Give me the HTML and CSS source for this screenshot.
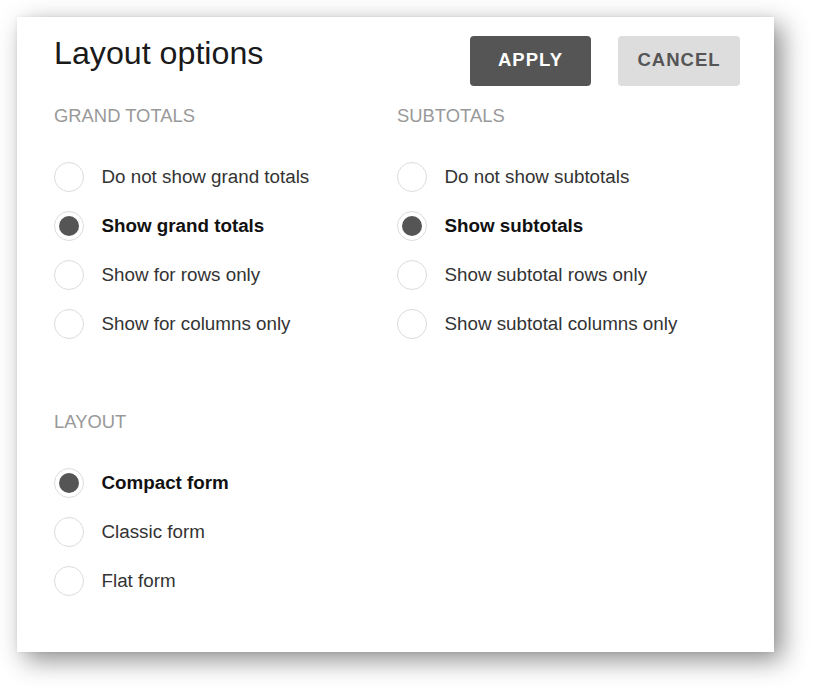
FILE: index.html
```html
<!DOCTYPE html>
<html lang="en">
<head>
<meta charset="utf-8">
<title>Layout options</title>
<link rel="stylesheet" href="styles.css">
</head>
<body>
<div class="panel">
  <div class="header">
    <h1 class="title">Layout options</h1>
    <div class="buttons">
      <button class="btn btn-apply">APPLY</button>
      <button class="btn btn-cancel">CANCEL</button>
    </div>
  </div>

  <div class="columns">
    <div class="section">
      <div class="section-title">GRAND TOTALS</div>
      <ul class="options">
        <li class="option"><span class="radio"></span><span class="label">Do not show grand totals</span></li>
        <li class="option selected"><span class="radio"></span><span class="label">Show grand totals</span></li>
        <li class="option"><span class="radio"></span><span class="label">Show for rows only</span></li>
        <li class="option"><span class="radio"></span><span class="label">Show for columns only</span></li>
      </ul>
    </div>
    <div class="section">
      <div class="section-title">SUBTOTALS</div>
      <ul class="options">
        <li class="option"><span class="radio"></span><span class="label">Do not show subtotals</span></li>
        <li class="option selected"><span class="radio"></span><span class="label">Show subtotals</span></li>
        <li class="option"><span class="radio"></span><span class="label">Show subtotal rows only</span></li>
        <li class="option"><span class="radio"></span><span class="label">Show subtotal columns only</span></li>
      </ul>
    </div>
  </div>

  <div class="section layout-section">
    <div class="section-title">LAYOUT</div>
    <ul class="options">
      <li class="option selected"><span class="radio"></span><span class="label">Compact form</span></li>
      <li class="option"><span class="radio"></span><span class="label">Classic form</span></li>
      <li class="option"><span class="radio"></span><span class="label">Flat form</span></li>
    </ul>
  </div>
</div>
</body>
</html>
```

FILE: styles.css
```css
html, body {
  margin: 0;
  padding: 0;
  background: #ffffff;
}

body {
  font-family: "Liberation Sans", Arial, sans-serif;
  width: 822px;
  height: 700px;
  overflow: hidden;
}

.panel {
  margin: 17px 0 0 17px;
  width: 757px;
  height: 635px;
  box-sizing: border-box;
  padding: 19px 34px 0 37px;
  background: #ffffff;
  box-shadow: 0 0 4px rgba(0, 0, 0, 0.06), 8px 8px 24px rgba(0, 0, 0, 0.45);
}

.header {
  display: flex;
  justify-content: space-between;
  align-items: flex-start;
  height: 50px;
}

.title {
  margin: 1px 0 0 0;
  font-size: 32.2px;
  line-height: 32px;
  font-weight: normal;
  color: #1a1a1a;
}

.buttons {
  display: flex;
  gap: 27px;
}

.btn {
  height: 50px;
  border: none;
  border-radius: 4px;
  font-family: "Liberation Sans", Arial, sans-serif;
  font-size: 18.5px;
  font-weight: bold;
  letter-spacing: 1px;
  padding: 0 0 3px 0;
  cursor: pointer;
}

.btn-apply {
  width: 121px;
  background: #555555;
  color: #ffffff;
}

.btn-cancel {
  width: 122px;
  background: #dddddd;
  color: #555555;
}

.columns {
  display: grid;
  grid-template-columns: 343px 343px;
  margin-top: 19px;
}

.section-title {
  font-size: 18.4px;
  line-height: 22px;
  color: #999999;
}

.options {
  list-style: none;
  margin: 25.5px 0 0 0;
  padding: 0;
}

.option {
  display: flex;
  align-items: center;
  height: 49px;
  font-size: 18.8px;
  color: #333333;
}

.radio {
  position: relative;
  width: 30px;
  height: 30px;
  box-sizing: border-box;
  border: 1px solid #dcdcdc;
  border-radius: 50%;
  margin-left: -0.5px;
  margin-right: 18px;
  flex: none;
  display: flex;
  align-items: center;
  justify-content: center;
}

.option.selected .radio::after {
  content: "";
  width: 20px;
  height: 20px;
  border-radius: 50%;
  background: #555555;
}

.option.selected .label {
  font-weight: bold;
  color: #111111;
}

.layout-section {
  margin-top: 62.5px;
}
```
